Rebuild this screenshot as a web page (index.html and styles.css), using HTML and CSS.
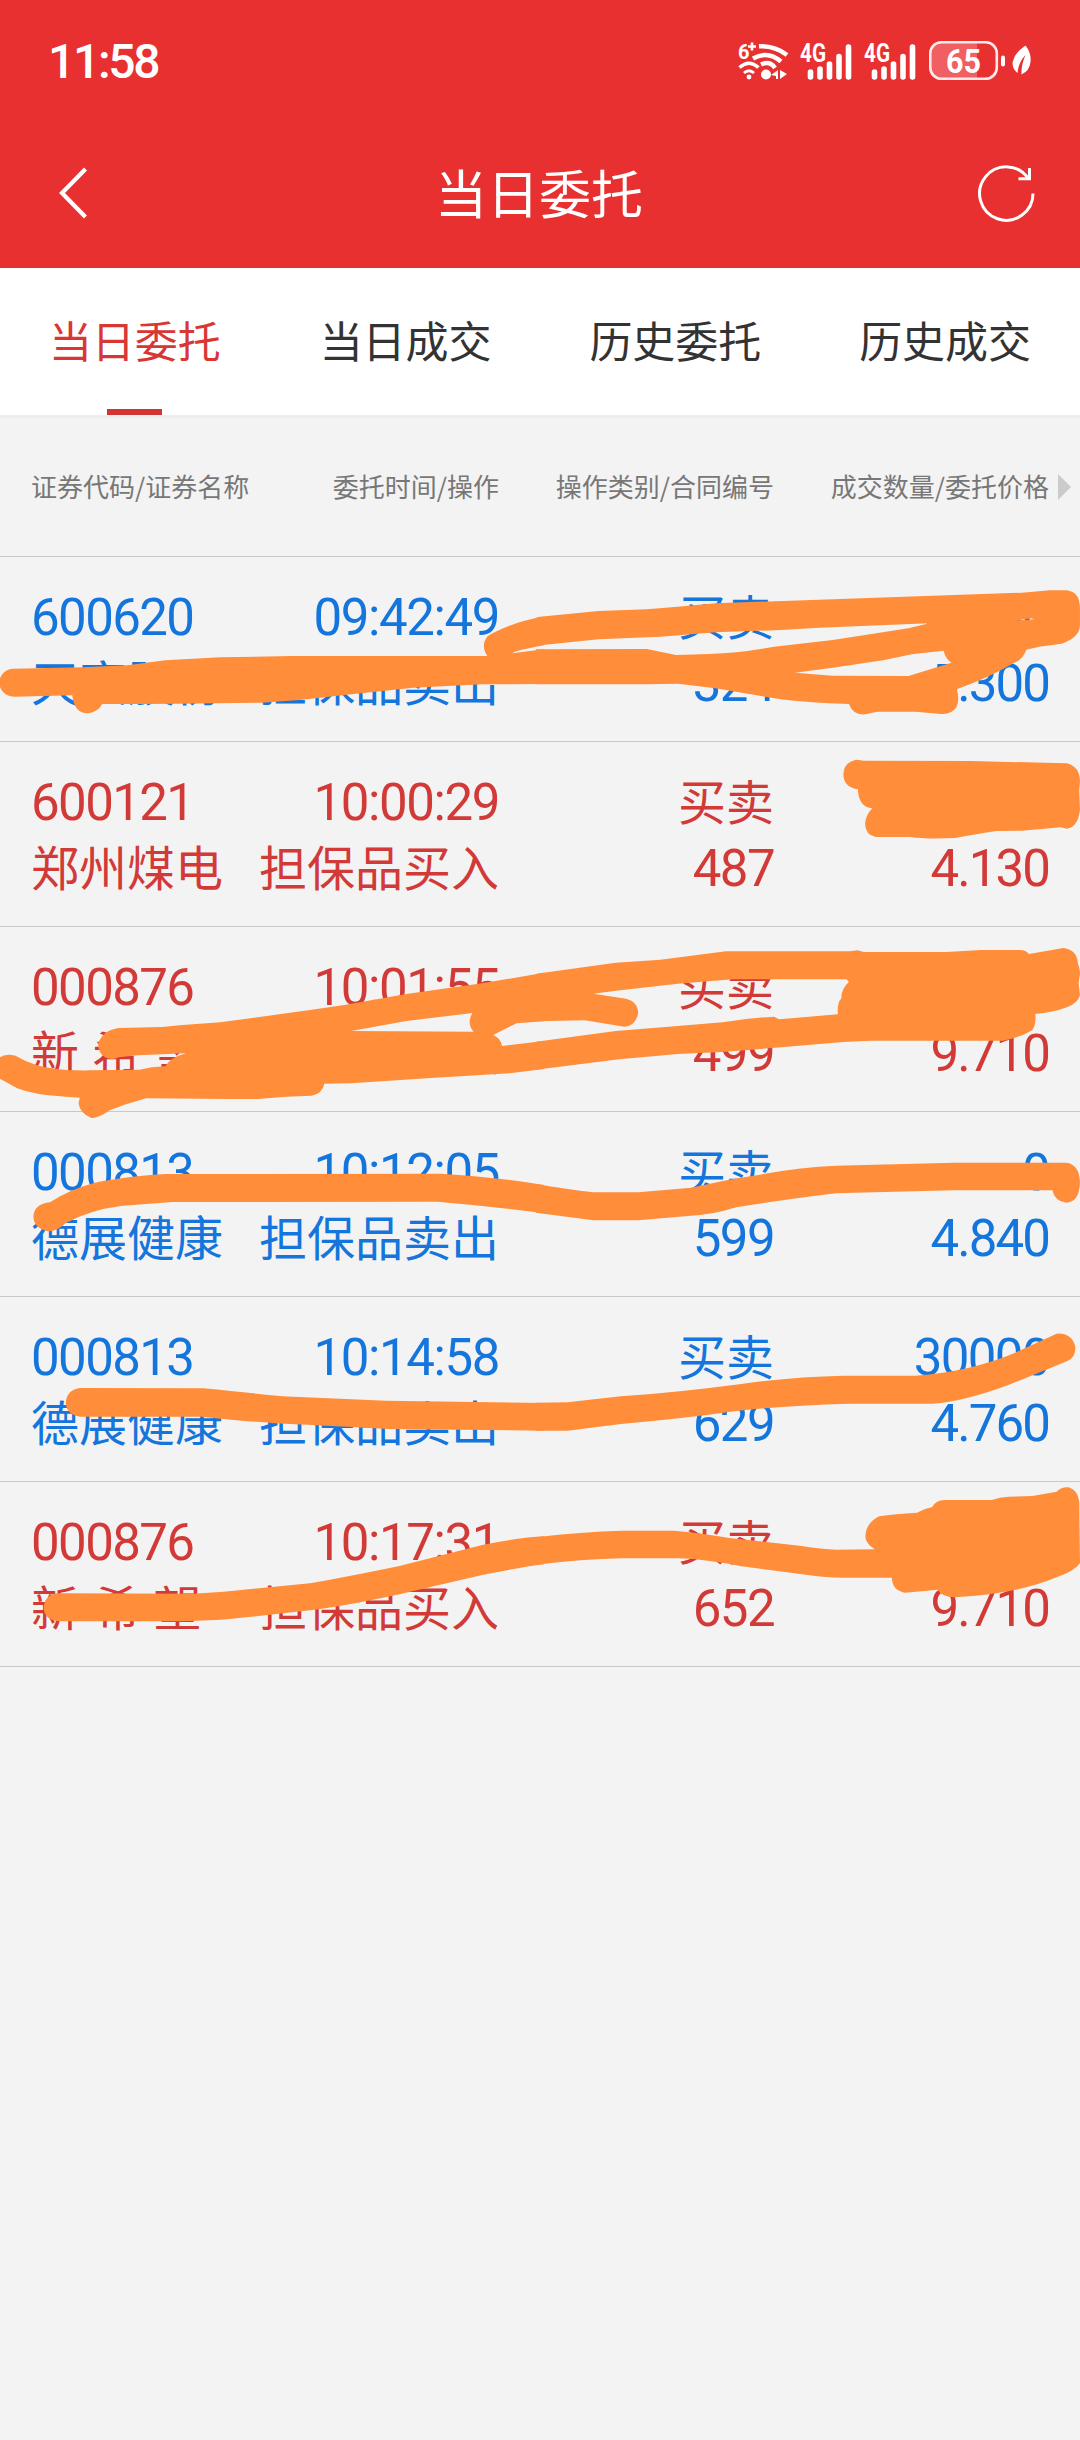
FILE: index.html
```html
<!DOCTYPE html>
<html lang="zh-CN">
<head>
<meta charset="utf-8">
<title>当日委托</title>
<link rel="stylesheet" href="styles.css">
</head>
<body>
<header class="top">
  <div class="status">
    <span class="clock">11:58</span>
    <div class="status-icons">
      <svg class="wifi" viewBox="0 0 51 38" width="51" height="38">
        <g fill="none" stroke="#fff" stroke-width="4.4">
          <path d="M21 4.300Q37 3.500 49 13"/>
          <path d="M15 16.500Q30 8 43 19.500"/>
          <path d="M23 22.500Q32 18.500 37 26"/>
          <path d="M1.500 25.500Q11 17 20.500 25.500" stroke-width="3.500"/>
          <path d="M6 31Q11 26.500 16 31" stroke-width="3"/>
        </g>
        <circle cx="11" cy="35" r="2.400" fill="#fff"/>
        <circle cx="28" cy="32.500" r="5" fill="#fff"/>
        <path d="M33 33l7-5v9h-2v-3zM42 28l7 4-7 5z" fill="#fff"/>
        <text class="wifi-gen" x="0" y="16.500">6</text>
        <path d="M10 4.500h8M14 .5v8" stroke="#fff" stroke-width="2.600"/>
      </svg>
      <svg class="signal" viewBox="0 0 53 38" width="53" height="38">
        <text class="net" x="0" y="19.500" textLength="26" lengthAdjust="spacingAndGlyphs">4G</text>
        <path d="M10.500 30v5M20 27v8M29.500 22v13M39 14.500v20.500M48.500 5v30" stroke="#fff" stroke-width="5.600" stroke-linecap="round"/>
      </svg>
      <svg class="signal" viewBox="0 0 53 38" width="53" height="38">
        <text class="net" x="0" y="19.500" textLength="26" lengthAdjust="spacingAndGlyphs">4G</text>
        <path d="M10.500 30v5M20 27v8M29.500 22v13M39 14.500v20.500M48.500 5v30" stroke="#fff" stroke-width="5.600" stroke-linecap="round"/>
      </svg>
      <svg class="battery" viewBox="0 0 77 39" width="77" height="39">
        <path d="M12 2H48V37H12Q2 37 2 27V12Q2 2 12 2Z" fill="#f06062"/>
        <rect x="1.300" y="1.300" width="66.500" height="36.400" rx="11" fill="none" stroke="#ffe9e9" stroke-width="2.600"/>
        <path d="M74 16.500v7" stroke="#fff" stroke-width="4" stroke-linecap="round"/>
        <text class="level" x="34.500" y="31.500" text-anchor="middle" textLength="35" lengthAdjust="spacingAndGlyphs">65</text>
      </svg>
      <svg class="leaf" viewBox="0 0 20 31" width="20" height="31">
        <path d="M13.500 .5Q19.500 8 18.500 17Q17.500 26 9.500 29.500Q9 20 13.500 10Q6.500 17 5.500 28Q-.5 23 .8 16.500Q2.500 8 13.500 .5Z" fill="#fff"/>
      </svg>
    </div>
  </div>
  <div class="navbar">
    <svg class="back" viewBox="0 0 30 54" width="30" height="54"><path d="M27.500 3L4 27L27.500 51" fill="none" stroke="#fff" stroke-width="4.200"/></svg>
    <h1 class="title">当日委托</h1>
    <svg class="refresh" viewBox="0 0 58 58" width="58" height="58">
      <g fill="none" stroke="#fff" stroke-width="3">
        <path d="M55 29.500A26.700 26.700 0 1 1 51 15.500"/>
        <path d="M51.500 4V14.800H40.500"/>
      </g>
    </svg>
  </div>
</header>
<nav class="tabs">
  <a class="tab active">当日委托</a>
  <a class="tab">当日成交</a>
  <a class="tab">历史委托</a>
  <a class="tab">历史成交</a>
</nav>
<main class="orders">
  <div class="heading cols">
    <span>证券代码/证券名称</span><span>委托时间/操作</span><span>操作类别/合同编号</span><span>成交数量/委托价格</span>
    <i class="more"></i>
  </div>
  <div class="row cols sell">
    <span class="num">600620</span><span class="num time">09:42:49</span><span>买卖</span><span class="num">10000</span>
    <span>天宸股份</span><span>担保品卖出</span><span class="num">324</span><span class="num price">5.300</span>
  </div>
  <div class="row cols buy">
    <span class="num">600121</span><span class="num time">10:00:29</span><span>买卖</span><span class="num">10000</span>
    <span>郑州煤电</span><span>担保品买入</span><span class="num">487</span><span class="num price">4.130</span>
  </div>
  <div class="row cols buy">
    <span class="num">000876</span><span class="num time">10:01:55</span><span>买卖</span><span class="num">10000</span>
    <span>新 希 望</span><span>担保品买入</span><span class="num">499</span><span class="num price">9.710</span>
  </div>
  <div class="row cols sell">
    <span class="num">000813</span><span class="num time">10:12:05</span><span>买卖</span><span class="num">0</span>
    <span>德展健康</span><span>担保品卖出</span><span class="num">599</span><span class="num price">4.840</span>
  </div>
  <div class="row cols sell">
    <span class="num">000813</span><span class="num time">10:14:58</span><span>买卖</span><span class="num">30000</span>
    <span>德展健康</span><span>担保品卖出</span><span class="num">629</span><span class="num price">4.760</span>
  </div>
  <div class="row cols buy">
    <span class="num">000876</span><span class="num time">10:17:31</span><span>买卖</span><span class="num">10000</span>
    <span>新 希 望</span><span>担保品买入</span><span class="num">652</span><span class="num price">9.710</span>
  </div>
</main>
<!-- freehand marker strokes over the rows -->
<svg class="marker" viewBox="0 0 1080 2440" width="1080" height="2440" fill="#ff8d3a" fill-rule="evenodd">
  <g transform="translate(0 550) scale(.34436 .33333)">
    <path d="M1580 298L1420 318L850 318L640 322L480 331L370 346L240 352L40 356A42 42 0 0 0 40 440L210 436Q215 490 255 490Q285 486 297 462Q520 462 760 458L870 450L1000 435L1200 413L1400 403L1580 402Z"/>
    <path d="M1580 200Q1500 212 1430 250Q1405 262 1405 288Q1405 305 1420 325L1480 320L1492 306Q1530 295 1580 286Z"/>
  </g>
  <g transform="translate(540 550) scale(.34436 .33333)">
    <path d="M-12 203L0 200L170 183L310 178L400 170L510 160L810 149L1400 128L1480 121L1530 121Q1568 126 1568 175L1568 225Q1568 262 1515 281L1450 290L1412 299Q1405 325 1375 340Q1300 385 1210 418Q1220 450 1209 472Q1195 494 1165 492L1090 485L980 485L945 493Q910 497 897 462L840 460Q760 456 700 448L510 415L400 401L310 403L-12 403L-12 298L310 297L395 315Q500 313 570 307Q630 300 680 290L850 270L1070 235L1130 220L810 233L700 240L510 247L350 260L170 268L-12 287ZM740 368L850 377L1070 378L1195 338Q1178 328 1172 302L1080 313L1000 330L850 353ZM1380 212L1436 208L1425 205Z"/>
    <path d="M918 629Q932 630 940 632L1250 633L1530 640Q1568 650 1568 695L1566 720L1568 780Q1562 832 1530 836L1512 832L1400 842L1325 843Q1270 852 1205 864Q1120 868 1075 861L975 861Q944 855 944 820Q946 795 965 775Q925 772 923 718Q881 712 881 672Q883 636 918 629Z"/>
  </g>
  <g transform="translate(0 920) scale(.34436 .33333)">
    <path d="M345 324L470 321L530 315L640 307L900 270L1000 255L1180 222L1400 190L1580 158L1580 304L1500 310L1432 345Q1455 355 1458 378L1580 363L1580 447L1480 460L1240 475L1020 490L942 491Q935 522 905 527L830 530L750 537L660 537L425 535Q370 550 320 570Q285 595 265 594Q232 580 228 550L232 533L190 530Q100 525 50 505L0 476L0 412Q15 400 45 407Q100 440 160 446Q200 452 260 451L405 449Q440 440 480 439Q495 412 540 400L400 406L345 412Q325 422 305 412Q285 400 285 370Q300 330 345 324ZM1020 333L1180 303L1372 279Q1354 310 1375 335Z"/>
    <path d="M97 888Q100 852 145 847Q200 810 270 790Q340 772 480 762L1280 761Q1450 772 1580 795L1580 880Q1420 858 1270 845L500 846L350 858Q260 870 190 910Q165 935 140 934Q97 925 97 888Z"/>
  </g>
  <g transform="translate(540 920) scale(.34436 .33333)">
    <path d="M-12 162L0 160L220 128L350 119L540 94L900 94L922 91L940 96L1180 96L1280 90L1395 90Q1410 90 1420 102L1520 84Q1560 90 1562 130Q1568 145 1568 160L1564 190L1568 225Q1562 250 1530 262Q1490 278 1438 282Q1442 310 1430 330Q1400 350 1345 362L960 362L880 366L700 382L530 396L400 402L230 418L-12 449L-12 365L220 333L400 318L530 307Q600 295 680 290L694 298L865 283Q862 250 875 235Q875 205 897 186L890 178L560 178L400 191L220 212L155 221L250 236Q285 245 285 280Q278 318 245 320L130 301L-12 304Z"/>
    <path d="M-12 792Q80 808 155 817L285 817L440 803Q560 775 640 764Q760 740 860 737L1200 728L1530 728Q1568 735 1568 790Q1565 848 1528 848Q1495 845 1488 811L1200 811L860 820Q700 840 570 862Q500 885 430 888L285 901L155 901L-12 878Z"/>
  </g>
  <g transform="translate(0 1290) scale(.34436 .33333)">
    <path d="M233 294L590 295Q720 308 820 319L1120 332L1580 339L1580 422L1130 417Q900 405 800 400Q650 388 585 380L233 380Q192 375 191 337Q195 298 233 294Z"/>
    <path d="M168 910L560 911L650 905L900 880Q1000 862 1160 828L1400 765Q1510 742 1580 739L1580 823Q1510 832 1400 855L1150 915Q1000 948 900 961L660 988Q600 993 500 994L168 994Q127 988 127 952Q130 914 168 910Z"/>
  </g>
  <g transform="translate(540 1290) scale(.34436 .33333)">
    <path d="M-12 338L80 337L235 319Q400 307 590 281Q740 260 880 257L1090 257Q1250 245 1380 188L1500 131Q1545 128 1555 172Q1555 205 1530 214L1360 285Q1230 335 1140 341L900 341Q700 347 570 363Q420 385 235 402L80 422L-12 422Z"/>
    <path d="M-12 742Q120 725 240 722L390 722Q460 728 550 744L760 768Q820 778 860 779L972 778Q945 760 945 740Q945 700 985 679Q1030 672 1095 668Q1120 655 1138 652Q1150 630 1175 630L1312 630Q1335 621 1360 620L1430 618L1500 605Q1515 590 1535 592Q1562 600 1566 635L1568 820Q1550 845 1500 862Q1400 905 1265 917L1205 922Q1165 920 1155 899L1060 908Q1022 900 1022 863L880 863Q820 862 800 858L580 828Q460 805 400 805L240 805Q120 808 -12 824Z"/>
  </g>
</svg>
</body>
</html>
```
FILE: styles.css
```css
* { box-sizing: border-box; }
body {
  margin: 0;
  position: relative;
  width: 1080px;
  min-height: 2440px;
  background: #f3f3f3;
  font-family: "Noto Sans CJK SC", sans-serif;
}
svg { display: block; flex: none; overflow: visible; }
.top { height: 268px; background: #e83030; color: #fff; }
.status {
  height: 121px;
  padding: 0 48px 0 48px;
  display: flex;
  justify-content: space-between;
  align-items: center;
}
.clock { padding-top: 3px; font-family: Roboto, sans-serif; font-size: 48px; font-weight: 500; line-height: 60px; letter-spacing: -2.300px; }
.status-icons { display: flex; align-items: center; }
.signal { margin-left: 11px; }
.battery { margin-left: 12px; }
.leaf { margin-left: 6px; }
.wifi-gen, .net, .level { fill: #fff; font-family: Roboto, sans-serif; font-weight: 700; }
.wifi-gen { font-size: 20px; }
.net { font-size: 25px; }
.level { font-size: 34px; }
.navbar {
  height: 147px;
  padding: 0 44px 3px 58px;
  display: flex;
  justify-content: space-between;
  align-items: center;
}
.title { margin: 0; font-size: 52px; font-weight: 400; line-height: 74px; padding: 0 0 2px 12px; }
.tabs {
  height: 150px;
  display: flex;
  background: #fff;
  border-bottom: 3px solid #ededed;
}
.tab {
  flex: 1;
  display: flex;
  flex-direction: column;
  align-items: center;
  font-size: 43px;
  line-height: 142px;
  color: #333;
}
.active { padding-right: 1px; color: #d93734; }
.active::after { content: ""; width: 55px; height: 6px; margin-top: -1px; background: #d03434; }
.cols {
  display: grid;
  grid-template-columns: 225px 243px 275px 275px;
  padding: 0 31px;
  border-bottom: 1px solid #c8c8c8;
  white-space: nowrap;
}
.cols > span { text-align: right; }
.cols > span:nth-child(4n+1) { text-align: left; }
.heading { position: relative; height: 139px; font-size: 26px; line-height: 136px; color: #777; }
.more {
  position: absolute;
  left: 1058px;
  top: 56px;
  border: solid transparent;
  border-width: 13px 0 13px 13px;
  border-left-color: #cbcbcb;
}
.row { height: 185px; padding-top: 24px; grid-auto-rows: 66px; font-size: 48px; line-height: 66px; word-spacing: 2.500px; }
.num { margin-top: 4px; font-family: Roboto, sans-serif; font-size: 51px; letter-spacing: -1.600px; }
.time { letter-spacing: -1.400px; }
.price { letter-spacing: -1.900px; }
.sell { color: #1475dc; }
.buy { color: #d23a38; }
.marker { position: absolute; left: 0; top: 0; pointer-events: none; }
```
